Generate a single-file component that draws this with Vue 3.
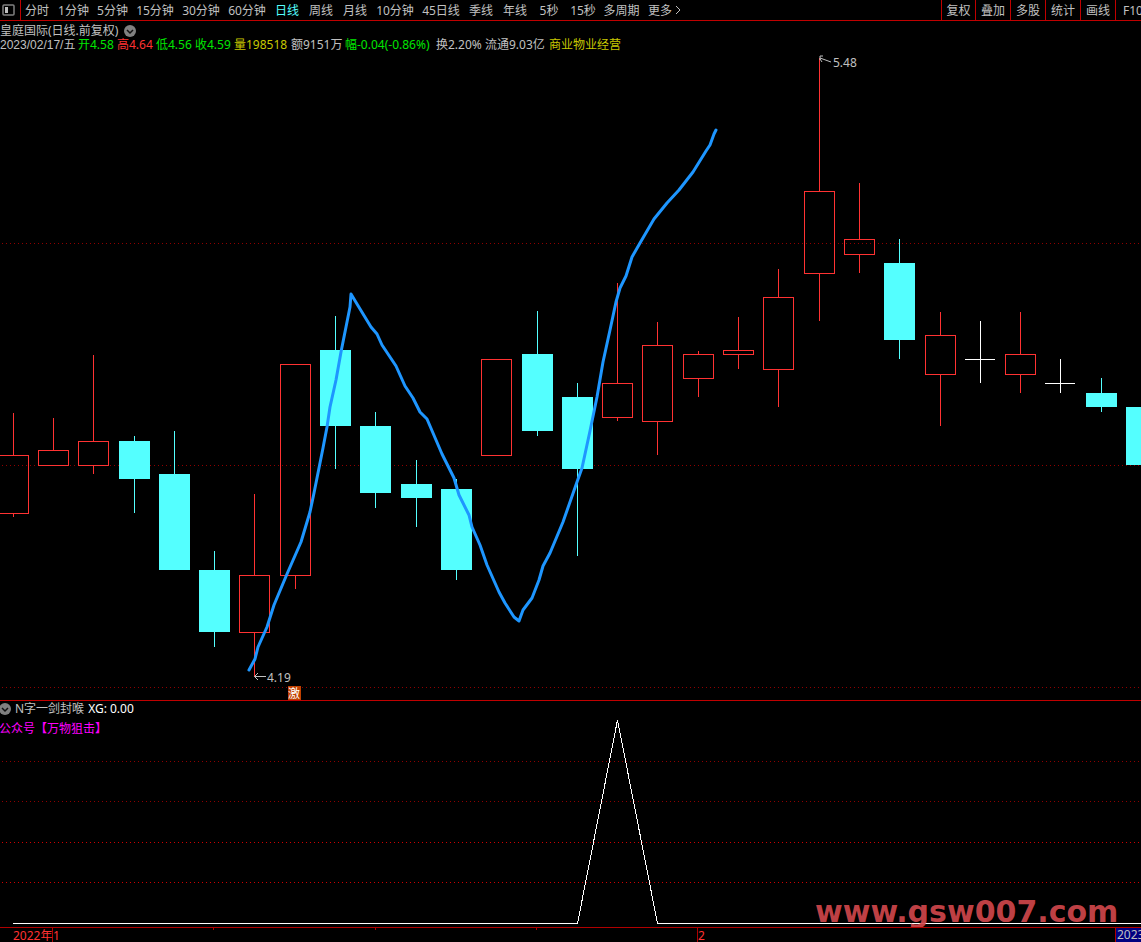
<script setup>
import { ref } from 'vue'

const periods = [
  { name: '分时', size: 'w2' },
  { name: '1分钟', size: 'w3' },
  { name: '5分钟', size: 'w3' },
  { name: '15分钟', size: 'w4' },
  { name: '30分钟', size: 'w4' },
  { name: '60分钟', size: 'w4' },
  { name: '日线', size: 'w2' },
  { name: '周线', size: 'w2' },
  { name: '月线', size: 'w2' },
  { name: '10分钟', size: 'w4' },
  { name: '45日线', size: 'w4' },
  { name: '季线', size: 'w2' },
  { name: '年线', size: 'w2' },
  { name: '5秒', size: 'w2' },
  { name: '15秒', size: 'w2' },
  { name: '多周期', size: 'w5' }
]
const active = ref('日线')
const tools = ['复权', '叠加', '多股', '统计', '画线']

const quote = [
  { label: '2023/02/17/五', value: '', color: 'date' },
  { label: '开', value: '4.58', color: 'green' },
  { label: '高', value: '4.64', color: 'red' },
  { label: '低', value: '4.56', color: 'green' },
  { label: '收', value: '4.59', color: 'green' },
  { label: '量', value: '198518', color: 'yellow' },
  { label: '额', value: '9151万', color: 'gray' },
  { label: '幅', value: '-0.04(-0.86%)', color: 'green' },
  { label: '换', value: '2.20%', color: 'gray' },
  { label: '流通', value: '9.03亿', color: 'gray' },
  { label: '商业物业经营', value: '', color: 'yellow' }
]

// x, high, top, bottom, low, type
const candles = [
  [-2, 413, 455, 514, 517, 'up'],
  [38, 418, 450, 466, 466, 'up'],
  [78, 355, 441, 466, 474, 'up'],
  [119, 436, 441, 479, 513, 'down'],
  [159, 431, 474, 570, 570, 'down'],
  [199, 551, 570, 632, 647, 'down'],
  [239, 494, 575, 633, 677, 'up'],
  [280, 364, 364, 576, 589, 'up'],
  [320, 316, 350, 426, 469, 'down'],
  [360, 412, 426, 493, 508, 'down'],
  [401, 460, 484, 498, 527, 'down'],
  [441, 479, 489, 570, 580, 'down'],
  [481, 359, 359, 456, 456, 'up'],
  [522, 311, 354, 431, 436, 'down'],
  [562, 383, 397, 469, 556, 'down'],
  [602, 283, 383, 418, 421, 'up'],
  [642, 322, 345, 422, 455, 'up'],
  [683, 351, 354, 379, 397, 'up'],
  [723, 317, 350, 355, 369, 'up'],
  [763, 269, 297, 370, 407, 'up'],
  [804, 58, 191, 274, 321, 'up'],
  [844, 183, 239, 255, 273, 'up'],
  [884, 239, 263, 340, 359, 'down'],
  [925, 312, 335, 375, 426, 'up'],
  [965, 321, 359, 360, 383, 'flat'],
  [1005, 312, 354, 375, 393, 'up'],
  [1045, 359, 383, 384, 393, 'flat'],
  [1086, 378, 393, 407, 412, 'down'],
  [1126, 407, 407, 465, 465, 'down']
].map(([x, high, top, bottom, low, type]) => ({ x, high, top, bottom, low, type }))

const drawing = [
  '249,670 255,659 258,647 267,627 274,605 287,574 301,542 310,512 314,493 319,468',
  '323,448 327,427 330,407 336,380 341,352 347,322 350,307 351,294 357,304 371,327',
  '377,334 382,345 396,366 405,386 413,398 420,412 427,419 433,433 442,454 454,478',
  '459,495 469,515 472,527 480,545 487,565 499,592 505,603 514,617 519,621 523,610',
  '532,598 539,580 543,566 550,553 563,522 577,482 582,468 590,431 597,397 603,362',
  '610,330 616,302 620,288 626,276 632,257 640,243 647,231 654,219 667,203 679,190',
  '693,172 706,151 710,145 714,134 716,130'
].join(' ')
</script>

<template>
  <div class="app">
    <nav class="toolbar">
      <button class="panel-btn" aria-label="侧栏">
        <svg width="14" height="12" viewBox="0 0 14 12">
          <rect x="1" y="1" width="11" height="10" rx="1" fill="none" stroke="#808080" stroke-width="1.5" />
          <rect x="3" y="3" width="3" height="6" fill="#c0c0c0" />
        </svg>
      </button>
      <button
        v-for="p in periods"
        :key="p.name"
        class="period"
        :class="[p.size, { active: active === p.name }]"
        @click="active = p.name"
      >{{ p.name }}</button>
      <button class="period more">更多
        <svg width="6" height="10" viewBox="0 0 6 10"><path d="M1 1 L5 5 L1 9" fill="none" stroke="#c0c0c0" /></svg>
      </button>
      <div class="tools">
        <button v-for="t in tools" :key="t" class="tool">{{ t }}</button>
        <button class="tool last">F10</button>
      </div>
    </nav>

    <header class="info">
      <div class="title">
        <span>皇庭国际(日线.前复权)</span>
        <svg width="12" height="12" viewBox="0 0 12 12">
          <circle cx="6" cy="6" r="6" fill="#808080" />
          <path d="M3 5 L6 8 L9 5" fill="none" stroke="#111" stroke-width="1.5" />
        </svg>
      </div>
      <div class="quote">
        <span v-for="q in quote" :key="q.label" :class="q.color">{{ q.label }}{{ q.value }}</span>
      </div>
    </header>

    <svg class="chart" viewBox="0 51 1141 649">
      <line v-for="y in [243, 465, 687]" :key="y" class="grid" x1="2" :y1="y + 0.5" x2="1141" :y2="y + 0.5" />
      <g v-for="c in candles" :key="c.x" :class="c.type">
        <rect class="wick" :x="c.x + 15" :y="c.high" width="1" :height="c.top - c.high" />
        <rect class="wick" :x="c.x + 15" :y="c.bottom" width="1" :height="c.low - c.bottom" />
        <rect v-if="c.type === 'up'" class="box" :x="c.x + 0.5" :y="c.top + 0.5" width="30" :height="c.bottom - c.top - 1" />
        <rect v-else class="wick" :x="c.x" :y="c.top" :width="c.type === 'flat' ? 30 : 31" :height="c.bottom - c.top" />
      </g>
      <polyline class="drawing" :points="drawing" />
      <path class="arrow" d="M831 62 L820 58 M823 56 H820 V60 M820 59 L822 62" />
      <text class="label" x="833" y="67">5.48</text>
      <path class="arrow" d="M266 676.5 H255 M258 673 L254.5 676.5 L258 680" />
      <text class="label" x="267" y="682">4.19</text>
      <rect x="288" y="686" width="13" height="14" fill="#c04000" />
      <text class="badge" x="288" y="698">激</text>
    </svg>

    <section class="indicator">
      <div class="title">
        <svg width="12" height="12" viewBox="0 0 12 12">
          <circle cx="6" cy="6" r="6" fill="#808080" />
          <path d="M3 5 L6 8 L9 5" fill="none" stroke="#111" stroke-width="1.5" />
        </svg>
        <span>N字一剑封喉</span>
        <span class="xg">XG: 0.00</span>
      </div>
      <svg class="chart" viewBox="0 718 1141 209">
        <line v-for="y in [761, 801]" :key="y" class="grid" x1="2" :y1="y + 0.5" x2="1141" :y2="y + 0.5" />
        <line v-for="y in [842, 882]" :key="y" class="grid bright" x1="2" :y1="y + 0.5" x2="1141" :y2="y + 0.5" />
        <text class="account" x="-1" y="733">公众号【万物狙击】</text>
        <polyline class="signal" points="13,923.5 577.5,923.5 617.5,720 657.5,923.5 1141,923.5" />
        <text class="watermark" x="815" y="922">www.gsw007.com</text>
      </svg>
    </section>

    <svg class="chart axis" viewBox="0 927 1141 15">
      <rect x="0" y="927" width="1141" height="1" />
      <rect v-for="x in [213, 375, 536]" :key="x" :x="x" y="928" width="1" height="2" />
      <rect v-for="x in [52, 697, 1115]" :key="x" :x="x" y="928" width="1" height="14" />
      <rect class="current" x="1116" y="928" width="25" height="14" />
      <text x="13" y="940">2022年</text>
      <text x="53" y="940">1</text>
      <text x="698" y="940">2</text>
      <text class="year" x="1117" y="939">2023</text>
    </svg>
  </div>
</template>

<style>
body {
  background: #000;
  overflow-x: hidden;
}
</style>

<style scoped>
.app {
  background: #000;
  color: #c0c0c0;
  font-family: "Noto Sans", "Noto Sans CJK SC", sans-serif;
  font-size: 12px;
  line-height: 14px;
  overflow: hidden;
}
button {
  flex: none;
  padding: 2px 0 0;
  background: none;
  border: none;
  color: inherit;
  font: inherit;
  white-space: nowrap;
  cursor: pointer;
}
.toolbar {
  display: flex;
  height: 20px;
  border-bottom: 1px solid #c00000;
}
.panel-btn {
  width: 21px;
  padding: 0 2px 0 0;
  border-right: 1px solid #c00000;
}
.panel-btn svg {
  display: block;
  margin: 0 auto;
}
.period {
  padding-right: 2px;
}
.w2 {
  width: 34px;
}
.w3 {
  width: 39px;
}
.w4 {
  width: 46px;
}
.w5,
.more {
  width: 43px;
}
.active {
  color: #54ffff;
}
.tools {
  display: flex;
  margin-left: auto;
}
.tool {
  width: 35px;
  border-left: 1px solid #c00000;
}
.tool:first-child {
  width: 34px;
}
.last {
  width: 26px;
  padding-left: 7px;
  text-align: left;
  overflow: hidden;
}
.info {
  padding: 3px 0 0;
}
.title {
  display: flex;
  align-items: center;
  gap: 6px;
  height: 14px;
  white-space: nowrap;
}
.quote {
  display: grid;
  grid-template-columns: 75px 36px 36px 36px 36px 54px 51px 88px 46px 61px auto;
  gap: 3px;
  height: 13px;
  white-space: nowrap;
}
.date {
  font-family: "Liberation Sans", "Noto Sans CJK SC", sans-serif;
}
.red {
  color: #ff3232;
}
.green {
  color: #00e600;
}
.yellow {
  color: #c8c800;
}
.chart {
  display: block;
  width: 100%;
  height: auto;
  overflow: visible;
}
.grid {
  stroke: #900000;
  stroke-dasharray: 1 3;
  shape-rendering: crispEdges;
}
.grid.bright {
  stroke: #d00000;
}
.wick,
.box {
  shape-rendering: crispEdges;
}
.up .wick {
  fill: #ff3232;
}
.down .wick {
  fill: #54ffff;
}
.flat .wick {
  fill: #fff;
}
.box {
  fill: none;
  stroke: #ff3232;
}
.drawing {
  fill: none;
  stroke: #1e96ff;
  stroke-width: 3;
  stroke-linejoin: round;
  stroke-linecap: round;
}
.arrow {
  fill: none;
  stroke: #c0c0c0;
}
.label {
  fill: #c0c0c0;
}
.badge {
  fill: #fff;
}
.indicator {
  border-top: 1px solid #c00000;
}
.indicator .title {
  box-sizing: border-box;
  height: 17px;
  padding-bottom: 1px;
  gap: 4px;
  margin-left: -1px;
}
.xg {
  color: #fff;
}
.account {
  fill: #f0f;
}
.signal {
  fill: none;
  stroke: #fff;
  shape-rendering: crispEdges;
}
.watermark {
  fill: #d2474c;
  fill-opacity: 0.93;
  font-family: "DejaVu Sans", sans-serif;
  font-size: 30px;
  font-weight: bold;
}
.axis rect {
  fill: #b00000;
}
.axis .current {
  fill: #000080;
}
.axis text {
  fill: #ff3232;
}
.axis .year {
  fill: #c0c0c0;
}
</style>
